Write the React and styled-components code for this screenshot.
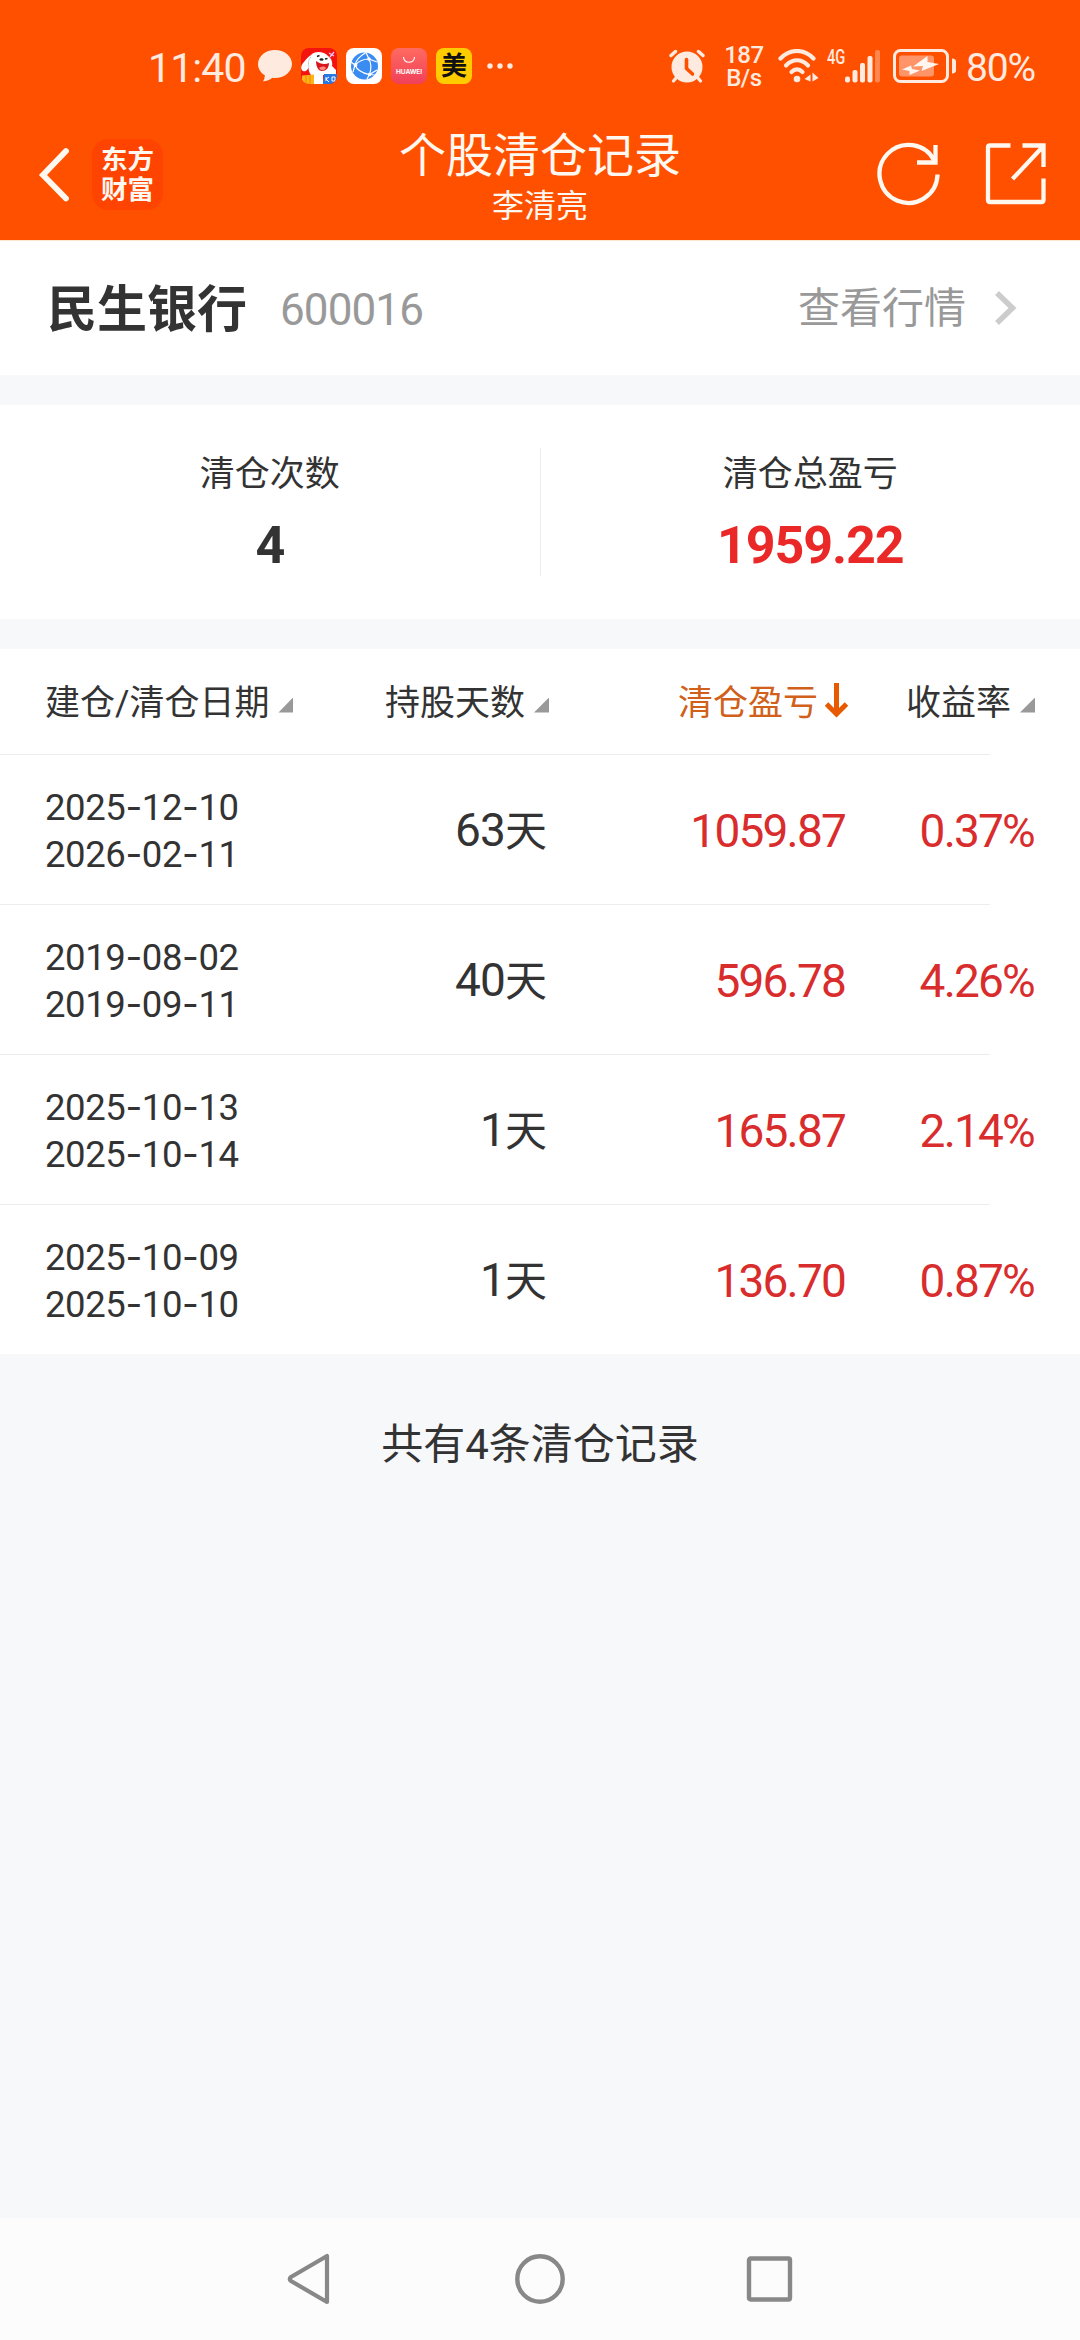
import React from "react";
import styled, { createGlobalStyle } from "styled-components";

const GlobalStyle = createGlobalStyle`
  :root {
    --brand: #ff5000;
    --text: #333;
    --muted: #999;
    --outline: #ededed;
    --page: #f7f8fa;
    --rise: #d92c2c;
    --status: #ffeae0;
  }
  body {
    margin: 0;
    background: var(--page);
    color: var(--text);
    font-family: Roboto, "Noto Sans CJK SC", sans-serif;
  }
  svg {
    display: block;
    flex: none;
  }
`;

const Screen = styled.div`
  display: flex;
  flex-direction: column;
  width: 1080px;
  height: 2340px;
  overflow: hidden;
`;

const Header = styled.header`
  height: 240px;
  background: var(--brand);
  border-bottom: 1px solid #ffe8d2;
`;

const StatusBar = styled.div`
  display: flex;
  justify-content: space-between;
  align-items: center;
  height: 84px;
  padding: 24px 45px 0 148px;
  color: var(--status);
`;

const StatusGroup = styled.div`
  display: flex;
  align-items: center;
  gap: ${p => p.gap || 0}px;
`;

const Clock = styled.span`
  font-size: 41px;
  line-height: 48px;
  width: 101px;
  letter-spacing: -0.9px;
  margin-top: 4px;
`;

const AppIcon = styled.span`
  display: flex;
  align-items: center;
  justify-content: center;
  width: 36px;
  height: 36px;
  border-radius: 8px;
  overflow: hidden;
  background: ${p => p.color};
  color: #111;
  font-size: 26px;
  font-weight: 700;
  line-height: 36px;
`;

const StoreIcon = styled(AppIcon)`
  flex-direction: column;
  gap: 4px;
  background: linear-gradient(#ff6a60, #f0405a);
  color: #fff;
`;

const Brand = styled.span`
  font-family: Inter, sans-serif;
  font-size: 6.5px;
  line-height: 8px;
  letter-spacing: -0.1px;
`;

const Spaced = styled.span`
  margin-left: ${p => p.space}px;
`;

const Speed = styled.span`
  display: flex;
  flex-direction: column;
  width: 42px;
  margin: 2px 0 0 18px;
  font-size: 24px;
  line-height: 23px;
  font-weight: 500;
  text-align: center;
  letter-spacing: -0.5px;
`;

const Network = styled.span`
  align-self: flex-start;
  width: 18px;
  margin-left: 8px;
  font-size: 21px;
  font-weight: 500;
  line-height: 16px;
  transform: scaleX(0.7);
  transform-origin: 0 0;
`;

const Battery = styled.span`
  margin: 4px 0 0 9px;
  font-size: 39px;
  line-height: 44px;
  letter-spacing: -1.1px;
`;

const TitleBar = styled.div`
  display: grid;
  grid-template-columns: 1fr auto 1fr;
  height: 132px;
  color: #fff8f0;
`;

const TitleLeft = styled.div`
  display: flex;
  align-items: center;
  gap: 22px;
  padding-left: 38px;
`;

const TitleRight = styled(TitleLeft)`
  justify-content: flex-end;
  gap: 44px;
  padding: 0 33px 0 0;
`;

const Logo = styled.div`
  box-sizing: border-box;
  width: 71px;
  height: 71px;
  margin-top: 1px;
  padding: 6px 0 0 9px;
  border-radius: 16px;
  background: #ff4300;
  font-size: 26.5px;
  font-weight: 700;
  line-height: 29.5px;
  white-space: nowrap;
`;

const Titles = styled.div`
  text-align: center;
  padding-top: 18px;
`;

const Title = styled.h1`
  margin: 0;
  font-size: 47px;
  font-weight: 400;
  line-height: 60px;
`;

const Subtitle = styled.div`
  font-size: 32px;
  line-height: 40px;
`;

const StockBar = styled.section`
  display: flex;
  align-items: center;
  box-sizing: border-box;
  height: 134px;
  padding: 4px 62px 0 47px;
  background: #fff;
`;

const StockName = styled.span`
  font-size: 50px;
  font-weight: 700;
  line-height: 60px;
`;

const StockCode = styled.span`
  flex: 1;
  margin-left: 33px;
  color: var(--muted);
  font-size: 44px;
  line-height: 60px;
  letter-spacing: -0.9px;
`;

const QuoteLink = styled.a`
  display: flex;
  align-items: center;
  gap: 28px;
  margin-bottom: 3px;
  color: var(--muted);
  font-size: 42px;
  line-height: 58px;
`;

const Summary = styled.section`
  display: flex;
  align-items: center;
  height: 214px;
  margin: 30px 0;
  background: #fff;
`;

const Stat = styled.div`
  flex: 1;
  text-align: center;
  & + & {
    border-left: 1px solid var(--outline);
  }
`;

const StatLabel = styled.div`
  padding-top: 2px;
  font-size: 35px;
  line-height: 50px;
`;

const StatValue = styled.div`
  margin-top: 17px;
  padding-bottom: 1px;
  color: ${p => (p.$rise ? "#eb2828" : "inherit")};
  font-size: 52px;
  font-weight: 700;
  line-height: 58px;
  letter-spacing: -1.1px;
`;

const Row = styled.div`
  display: grid;
  grid-template-columns: 248px 256px 299px 187px;
  align-items: center;
  box-sizing: border-box;
  height: 150px;
  padding: 3px 0 0 45px;
  background: linear-gradient(var(--outline), var(--outline)) 0 0 / 990px 1px
    no-repeat #fff;
`;

const HeadRow = styled(Row)`
  height: 105px;
  padding-top: 4px;
  background: #fff;
`;

const Head = styled.div`
  display: flex;
  align-items: center;
  justify-content: ${p => (p.$left ? "flex-start" : "flex-end")};
  gap: ${p => (p.$active ? 7 : 9)}px;
  color: ${p => (p.$active ? "#d0601a" : "inherit")};
  font-size: 35px;
  line-height: 50px;
  white-space: nowrap;
`;

const SortMark = styled.i`
  width: 15px;
  height: 15px;
  margin-top: 3px;
  background: var(--muted);
  clip-path: polygon(100% 0, 100% 100%, 0 100%);
`;

const SortArrow = styled.svg`
  margin-bottom: 5px;
`;

const Dates = styled.div`
  font-size: 36.5px;
  line-height: 47px;
  letter-spacing: -0.4px;
  white-space: nowrap;
`;

const Dash = styled.span`
  font-family: Inter, sans-serif;
`;

const Value = styled.div`
  padding: 1px 3px 0 0;
  font-size: 46px;
  line-height: 56px;
  letter-spacing: -0.9px;
  text-align: right;
`;

const Money = styled(Value)`
  padding-right: ${p => p.$inset}px;
  color: var(--rise);
  letter-spacing: -1.8px;
`;

const Unit = styled.span`
  font-size: 42px;
`;

const Total = styled.div`
  flex: 1;
  padding-top: 61px;
  font-size: 42px;
  line-height: 60px;
  text-align: center;
`;

const NavBar = styled.nav`
  display: flex;
  align-items: center;
  justify-content: center;
  gap: 179px;
  height: 122px;
  background: #fcfcfc;
`;

const records = [
  { open: "2025-12-10", close: "2026-02-11", days: 63, profit: "1059.87", rate: "0.37%" },
  { open: "2019-08-02", close: "2019-09-11", days: 40, profit: "596.78", rate: "4.26%" },
  { open: "2025-10-13", close: "2025-10-14", days: 1, profit: "165.87", rate: "2.14%" },
  { open: "2025-10-09", close: "2025-10-10", days: 1, profit: "136.70", rate: "0.87%" }
];

const DateText = ({ value }) => (
  <div>
    {value.split("-").map((part, i) => (
      <React.Fragment key={i}>
        {i > 0 && <Dash>-</Dash>}
        {part}
      </React.Fragment>
    ))}
  </div>
);

const MessageIcon = () => (
  <svg width="34" height="32" viewBox="0 0 34 32" fill="currentColor">
    <path d="M17 0C7.600 0 0 6.200 0 14c0 4.700 2.700 8.800 6.800 11.300 0 2.200-.5 4.200-1.800 6.200 3.700-.2 7-1.600 9.300-3.700 .9.100 1.800.200 2.700.200 9.400 0 17-6.200 17-14S26.400 0 17 0z" />
  </svg>
);

const DogIcon = () => (
  <svg width="36" height="36" viewBox="0 0 36 36">
    <rect width="36" height="36" fill="#f5130f" />
    <path d="M28 5l5 3M33 4l-4 5" stroke="#e8c8f8" strokeWidth="1.3" />
    <path
      d="M10 7c3-4 13-4 17 1 3 2 5 6 4 10l4 4v5H10c-2-3-3-6-2-9-1 4-3 6-6 5-3-2-2-6 1-9 2-3 4-5 7-7z"
      fill="#fff"
    />
    <path d="M10 9c-3 3-3 6-2 10" fill="none" stroke="#bbb" strokeWidth=".8" />
    <path d="M16 8.500l2.500-1M24 11l2.500-.5" stroke="#222" strokeWidth="1.400" />
    <ellipse cx="20.500" cy="11.500" rx="2" ry="1.300" fill="#222" />
    <path d="M15 13c4 3 9 4 13 2 0 5-3 8-7 8s-6-5-6-10z" fill="#d9151b" />
    <path d="M18 20c3-2 6-2 7 0-2 3-5 3-7 0z" fill="#ff8a80" />
    <path d="M1 27.500l12-1V36H1z" fill="#ffb31a" />
    <path d="M5 27v9M9 27v9" stroke="#f08a00" strokeWidth="1" />
    <path d="M13 27h9v9h-9z" fill="#fff" />
    <path d="M23 26h13v10H22z" fill="#2878e6" />
    <path d="M25 29v4M25 31l3-2M25 31l3 3M31 29h3v4h-3z" stroke="#fff" fill="none" />
  </svg>
);

const BrowserIcon = () => (
  <svg width="36" height="36" viewBox="0 0 36 36">
    <circle cx="18.500" cy="18" r="13.500" fill="#3b8cf2" />
    <g fill="none" stroke="#fff" strokeWidth="1.200">
      <path d="M20 4.500C14 8 10 12 9 17c2 5 7 8 14 9.500l6 .5" />
      <path d="M5 14l4 3-2 7" />
      <path d="M9 17c4-4 9-6 14-6 2 4 2.500 10 .5 15.500" />
      <path d="M20 4.500l3 6.500 8 3" />
      <path d="M21 31l2.500-4.500L31 22" />
    </g>
    <g fill="#fff">
      <circle cx="9.500" cy="17" r="1.900" />
      <circle cx="23" cy="11" r="1.700" />
      <circle cx="23.500" cy="26.500" r="1.800" />
    </g>
  </svg>
);

const MoreIcon = () => (
  <svg width="26" height="6" viewBox="0 0 26 6" fill="currentColor">
    <circle cx="3" cy="3" r="2.700" />
    <circle cx="13" cy="3" r="2.700" />
    <circle cx="23" cy="3" r="2.700" />
  </svg>
);

const AlarmIcon = () => (
  <svg width="36" height="34" viewBox="0 0 36 34" fill="none" stroke="currentColor" strokeLinecap="round">
    <circle cx="18" cy="18" r="15.500" fill="currentColor" stroke="none" />
    <path d="M2 6.500L6.500 2.500M34 6.500L29.500 2.500" strokeWidth="3.400" />
    <path d="M7 29l-2.500 3M29 29l2.500 3" strokeWidth="3.200" />
    <path d="M17.500 10.500v9l6 5.500" stroke="#ff5000" strokeWidth="3.600" strokeLinejoin="round" />
  </svg>
);

const WifiIcon = () => (
  <svg width="41" height="34" viewBox="0 0 41 34" fill="none" stroke="currentColor" strokeWidth="4.200" strokeLinecap="round">
    <path d="M2.500 9.500C12-.5 26-.5 35.500 9.500" />
    <path d="M8 16.500c6.500-7 15.500-7 22 0" />
    <path d="M13.500 23c3.500-3.500 7.500-3.500 11 0" />
    <circle cx="19" cy="30" r="3.300" fill="currentColor" stroke="none" />
    <path d="M26.500 30l6-4.500v7zM40.500 29l-6-5.500v9z" fill="currentColor" stroke="none" />
  </svg>
);

const SignalIcon = () => (
  <svg width="35" height="34" viewBox="0 0 35 34" fill="currentColor">
    <rect x="0" y="27.500" width="5" height="6" rx="2" />
    <rect x="7.500" y="21" width="5" height="12.500" rx="2" />
    <rect x="15" y="14" width="5" height="19.500" rx="2" />
    <rect x="22.500" y="7" width="5" height="26.500" rx="2" />
    <rect x="30" y="1" width="5" height="32.500" rx="2" opacity=".35" />
  </svg>
);

const BatteryIcon = () => (
  <svg width="64" height="34" viewBox="0 0 64 34">
    <rect x="1.500" y="1.500" width="53" height="31" rx="6" fill="none" stroke="currentColor" strokeWidth="3" />
    <rect x="6" y="6.500" width="35" height="21" rx="3" fill="#ff9468" />
    <path d="M59 9.500c2.500 0 4 1 4 3v9c0 2-1.500 3-4 3z" fill="currentColor" />
    <path d="M34.500 7L20 17.500l10-.5-1.500 5L46 15l-11.500-2zM18 16.500L9 20.500l7.500 1.500v4L27 21.500l-8-1.500z" fill="#fff6f0" />
  </svg>
);

const BackIcon = () => (
  <svg width="32" height="56" viewBox="0 0 32 56" fill="none" stroke="currentColor" strokeWidth="5.800" strokeLinecap="round">
    <path d="M28 5L5 29l23 23.500" />
  </svg>
);

const RefreshIcon = () => (
  <svg width="64" height="64" viewBox="0 0 64 64" fill="none" stroke="currentColor" strokeWidth="4.300">
    <path d="M60.500 32.500A29 29 0 1 1 57.500 19" />
    <path d="M40 20.500h18.500V3" />
  </svg>
);

const ShareIcon = () => (
  <svg width="62" height="62" viewBox="0 0 62 62" fill="none" stroke="currentColor" strokeWidth="4.300">
    <path d="M25.500 2.500H5q-2 0-2 2V57q0 2 2 2h51.500q2 0 2-2V35.500" strokeLinejoin="round" />
    <path d="M37.500 2.500h21V24M58 3.500L27.500 36" />
  </svg>
);

export default () => (
  <Screen>
    <GlobalStyle />
    <Header>
      <StatusBar>
        <StatusGroup gap={9}>
          <Clock>11:40</Clock>
          <MessageIcon />
          <AppIcon>
            <DogIcon />
          </AppIcon>
          <AppIcon color="#fff">
            <BrowserIcon />
          </AppIcon>
          <StoreIcon>
            <svg width="14" height="7" viewBox="0 0 14 7" fill="none" stroke="#fff" strokeWidth="1.200">
              <path d="M1.500 0c0 7 11 7 11 0" />
            </svg>
            <Brand>HUAWEI</Brand>
          </StoreIcon>
          <AppIcon color="#fc0">美</AppIcon>
          <Spaced space={6}>
            <MoreIcon />
          </Spaced>
        </StatusGroup>
        <StatusGroup>
          <AlarmIcon />
          <Speed>
            <span>187</span>
            <span>B/s</span>
          </Speed>
          <StatusGroup>
            <Spaced space={13}>
              <WifiIcon />
            </Spaced>
            <Network>4G</Network>
            <SignalIcon />
          </StatusGroup>
          <Spaced space={13}>
            <BatteryIcon />
          </Spaced>
          <Battery>80%</Battery>
        </StatusGroup>
      </StatusBar>
      <TitleBar>
        <TitleLeft>
          <BackIcon />
          <Logo>
            东方
            <br />
            财富
          </Logo>
        </TitleLeft>
        <Titles>
          <Title>个股清仓记录</Title>
          <Subtitle>李清亮</Subtitle>
        </Titles>
        <TitleRight>
          <RefreshIcon />
          <ShareIcon />
        </TitleRight>
      </TitleBar>
    </Header>

    <StockBar>
      <StockName>民生银行</StockName>
      <StockCode>600016</StockCode>
      <QuoteLink>
        查看行情
        <svg width="24" height="36" viewBox="0 0 24 36" fill="none" stroke="#ccc" strokeWidth="5.500">
          <path d="M3 2l15.500 15L3 32" />
        </svg>
      </QuoteLink>
    </StockBar>

    <Summary>
      <Stat>
        <StatLabel>清仓次数</StatLabel>
        <StatValue>4</StatValue>
      </Stat>
      <Stat>
        <StatLabel>清仓总盈亏</StatLabel>
        <StatValue $rise>1959.22</StatValue>
      </Stat>
    </Summary>

    <HeadRow>
      <Head $left>
        建仓/清仓日期
        <SortMark />
      </Head>
      <Head>
        持股天数
        <SortMark />
      </Head>
      <Head $active>
        清仓盈亏
        <SortArrow width="23" height="36" viewBox="0 0 23 36" fill="none" stroke="#e85a00" strokeWidth="5">
          <path d="M11.500 0v31M1.500 21l10 10 10-10" />
        </SortArrow>
      </Head>
      <Head>
        收益率
        <SortMark />
      </Head>
    </HeadRow>
    {records.map(r => (
      <Row key={r.open}>
        <Dates>
          <DateText value={r.open} />
          <DateText value={r.close} />
        </Dates>
        <Value>
          {r.days}
          <Unit>天</Unit>
        </Value>
        <Money $inset={3}>{r.profit}</Money>
        <Money $inset={1}>{r.rate}</Money>
      </Row>
    ))}

    <Total>共有4条清仓记录</Total>

    <NavBar>
      <svg width="50" height="54" viewBox="0 0 50 54" fill="none" stroke="#888" strokeWidth="4.200" strokeLinejoin="round">
        <path d="M42 4v46L6 29q-2.500-2 0-4z" />
      </svg>
      <svg width="52" height="52" viewBox="0 0 52 52" fill="none" stroke="#888" strokeWidth="4.400">
        <circle cx="26" cy="26" r="22.700" />
      </svg>
      <svg width="50" height="50" viewBox="0 0 50 50" fill="none" stroke="#888" strokeWidth="4.400">
        <rect x="4" y="4.500" width="41" height="41" rx="1.500" />
      </svg>
    </NavBar>
  </Screen>
);
